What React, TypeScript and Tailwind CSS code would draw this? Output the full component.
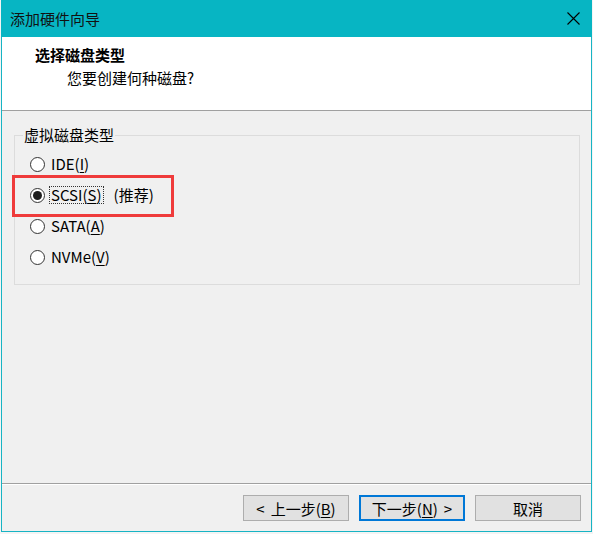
import React from 'react'

const font = { fontFamily: '"Noto Sans CJK SC", "Noto Sans", sans-serif' }

function Radio({ checked }: { checked?: boolean }) {
  return (
    <span className="w-[15px] h-[15px] rounded-full border border-[#333333] bg-white flex items-center justify-center shrink-0">
      {checked && <span className="w-[9px] h-[9px] rounded-full bg-[#1e1e1e]" />}
    </span>
  )
}

function Option({ name, mn, checked, extra }: { name: string; mn: string; checked?: boolean; extra?: string }) {
  return (
    <div className="flex items-center h-[20px] pl-[15px]">
      <Radio checked={checked} />
      <span
        className={
          'ml-[4px] px-[1px] leading-[16px] border ' +
          (checked ? 'border-dotted border-[#333333]' : 'border-transparent')
        }
      >
        {name}(<span className="underline underline-offset-2">{mn}</span>)
      </span>
      {extra && <span className="ml-[10px]">{extra}</span>}
    </div>
  )
}

function WizButton({ children, primary }: { children: React.ReactNode; primary?: boolean }) {
  return (
    <button
      className={
        'w-[106px] h-[26px] bg-[#e1e1e1] text-[15px] leading-none text-black flex items-center justify-center ' +
        (primary ? 'border-2 border-[#0078d7]' : 'border border-[#adadad]')
      }
    >
      {children}
    </button>
  )
}

export default function App() {
  return (
    <div className="w-[593px] h-[534px] bg-[#f4f4f4] pl-[1px] overflow-hidden text-black" style={font}>
      <div className="relative w-[591px] h-[532px] flex flex-col border-x border-b border-[#17b4c4] bg-[#f0f0f0]">
        <div className="h-[37px] bg-[#07b5c3] flex items-center justify-between pl-[9px] pr-[12px] -mx-[1px]">
          <span className="text-[15px] leading-none text-[#111]">添加硬件向导</span>
          <svg width="13" height="13" viewBox="0 0 13 13" className="text-black">
            <path d="M0.5 0.5 L12.5 12.5 M12.5 0.5 L0.5 12.5" stroke="currentColor" strokeWidth="1.1" />
          </svg>
        </div>

        <div className="h-[74px] bg-white border-b border-[#a0a0a0] pt-[8px]">
          <div className="pl-[33px] text-[15px] leading-[20px] font-bold">选择磁盘类型</div>
          <div className="pl-[65px] mt-[3px] text-[15px] leading-[20px]">您要创建何种磁盘?</div>
        </div>

        <div className="flex-1 pl-[12px] pr-[11px] pt-[14px]">
          <fieldset className="h-[160px] border border-[#dcdcdc] pt-[9px]">
            <legend className="ml-[8px] px-[1px] text-[15px] leading-[20px]">虚拟磁盘类型</legend>
            <div className="flex flex-col gap-[11px] text-[15px]">
              <Option name="IDE" mn="I" />
              <Option name="SCSI" mn="S" checked extra="(推荐)" />
              <Option name="SATA" mn="A" />
              <Option name="NVMe" mn="V" />
            </div>
          </fieldset>
        </div>

        <div className="border-t border-[#a0a0a0]">
          <div className="border-t border-white flex justify-end gap-[10px] pt-[10px] pb-[10px] pr-[10px]">
            <WizButton>
              <span className="mr-[6px]">&lt;</span>上一步(<span className="underline underline-offset-2">B</span>)
            </WizButton>
            <WizButton primary>
              下一步(<span className="underline underline-offset-2">N</span>)<span className="ml-[6px]">&gt;</span>
            </WizButton>
            <WizButton>取消</WizButton>
          </div>
        </div>

        <div className="absolute left-[10px] top-[175px] w-[162px] h-[42px] border-[3px] border-[#ef3b3b]" />
      </div>
    </div>
  )
}
